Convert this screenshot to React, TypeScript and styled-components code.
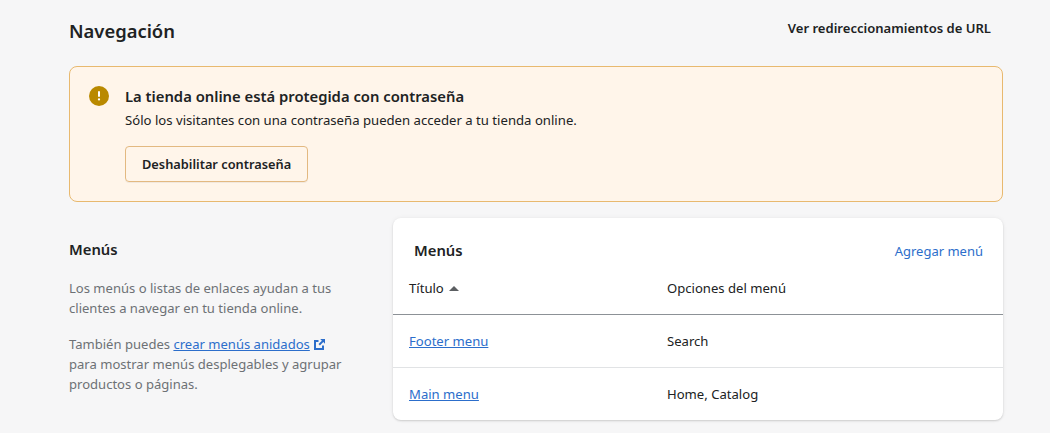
import React from 'react'
import styled, { createGlobalStyle } from 'styled-components'

const GlobalStyle = createGlobalStyle`
  html, body {
    margin: 0;
    height: 433px;
    overflow: hidden;
    background: #f6f6f7;
    font-family: "Noto Sans", "Open Sans", sans-serif;
    font-size: 13.1px;
    line-height: 20px;
    color: #202223;
  }
`

const Page = styled.div`
  width: 934px;
  margin-left: 69px;
  padding-top: 16px;
`

const Header = styled.header`
  display: flex;
  align-items: center;
  justify-content: space-between;
  height: 30px;
  margin-bottom: 20px;
`

const PageTitle = styled.h1`
  margin: 0;
  font-size: 18.4px;
  font-weight: 600;
  line-height: 30px;
`

const HeaderAction = styled.a`
  margin-right: 12px;
  margin-top: -6px;
  font-weight: 600;
  font-size: 13.05px;
`

const Banner = styled.section`
  display: flex;
  gap: 16px;
  box-sizing: border-box;
  height: 136px;
  padding: 19px 19px;
  background: #fff5ea;
  border: 1px solid #e8b96f;
  border-radius: 8px;
`

const BannerBody = styled.div`
  display: flex;
  flex-direction: column;
  align-items: flex-start;
`

const BannerTitle = styled.h2`
  margin: 0;
  font-size: 14.8px;
  font-weight: 600;
  line-height: 20px;
`

const BannerText = styled.p`
  margin: 4px 0 16px;
  font-size: 13.15px;
`

const Button = styled.button`
  height: 36px;
  padding: 0 16px;
  background: transparent;
  border: 1px solid #e3b981;
  border-radius: 4px;
  box-shadow: 0 1px 0 rgba(0, 0, 0, .05);
  font-family: inherit;
  font-size: 12.8px;
  font-weight: 600;
  color: #202223;
`

const Columns = styled.div`
  display: grid;
  grid-template-columns: 304px 610px;
  column-gap: 20px;
  margin-top: 16px;
`

const Aside = styled.div`
  padding-top: 21px;
`

const AsideTitle = styled.h3`
  margin: 0 0 19px;
  font-size: 14.8px;
  font-weight: 600;
  line-height: 20px;
`

const AsideText = styled.p`
  margin: 0 0 16px;
  font-size: 13.05px;
  color: #6d7175;
`

const TextLink = styled.a`
  color: #2c6ecb;
  text-decoration: underline;
`

const ExternalIcon = styled.svg`
  width: 11px;
  height: 11px;
  margin-left: 4.5px;
  vertical-align: -1px;
  fill: #2c6ecb;
`

const Card = styled.section`
  height: 202px;
  background: #fff;
  border-radius: 8px;
  box-shadow: 0 0 5px rgba(23, 24, 24, .05), 0 1px 2px rgba(0, 0, 0, .15);
  overflow: hidden;
`

const CardHeader = styled.div`
  display: flex;
  align-items: center;
  justify-content: space-between;
  height: 20px;
  padding: 22px 20px 0 21px;
`

const CardTitle = styled.h2`
  margin: 0;
  font-size: 14.8px;
  font-weight: 600;
`

const CardAction = styled.a`
  margin-top: 1px;
  font-size: 13px;
  color: #2c6ecb;
`

const Row = styled.div<{ $head?: boolean }>`
  display: grid;
  grid-template-columns: 258px 1fr;
  align-items: center;
  box-sizing: border-box;
  height: ${p => (p.$head ? '55px' : '53px')};
  padding-left: 16px;
  padding-top: ${p => (p.$head ? '2px' : '0')};
  padding-bottom: ${p => (p.$head ? '0' : '1px')};
  font-size: 13.1px;
  border-bottom: 1px solid ${p => (p.$head ? '#8c9196' : '#e1e3e5')};
  &:last-child {
    border-bottom: 0;
  }
`

const HeadLabel = styled.span`
  display: flex;
  align-items: center;
  gap: 5px;
`

const SortCaret = styled.svg`
  width: 10px;
  height: 5px;
  fill: #5c5f62;
`

const rows = [
  { title: 'Footer menu', options: 'Search' },
  { title: 'Main menu', options: 'Home, Catalog' },
]

export default function App() {
  return (
    <Page>
      <GlobalStyle />
      <Header>
        <PageTitle>Navegación</PageTitle>
        <HeaderAction>Ver redireccionamientos de URL</HeaderAction>
      </Header>

      <Banner>
        <svg width="20" height="20" viewBox="0 0 20 20">
          <circle cx="10" cy="10" r="10" fill="#b98900" />
          <rect x="9" y="5" width="2" height="6" rx="1" fill="#fff" />
          <circle cx="10" cy="13.4" r="1.15" fill="#fff" />
        </svg>
        <BannerBody>
          <BannerTitle>La tienda online está protegida con contraseña</BannerTitle>
          <BannerText>Sólo los visitantes con una contraseña pueden acceder a tu tienda online.</BannerText>
          <Button>Deshabilitar contraseña</Button>
        </BannerBody>
      </Banner>

      <Columns>
        <Aside>
          <AsideTitle>Menús</AsideTitle>
          <AsideText>Los menús o listas de enlaces ayudan a tus<br />clientes a navegar en tu tienda online.</AsideText>
          <AsideText>
            También puedes <TextLink>crear menús anidados</TextLink>
            <ExternalIcon viewBox="0 0 11 11">
              <path d="M6.2 0H11v4.8L9.3 3.1 5.9 6.5 4.5 5.1l3.4-3.4L6.2 0z" />
              <path d="M0 1h4.5v2H2v6h6V6.5h2V11H0V1z" />
            </ExternalIcon>
            <br />para mostrar menús desplegables y agrupar<br />productos o páginas.
          </AsideText>
        </Aside>

        <Card>
          <CardHeader>
            <CardTitle>Menús</CardTitle>
            <CardAction>Agregar menú</CardAction>
          </CardHeader>
          <Row $head>
            <HeadLabel>
              Título
              <SortCaret viewBox="0 0 10 5"><path d="M0 5l5-5 5 5z" /></SortCaret>
            </HeadLabel>
            <span>Opciones del menú</span>
          </Row>
          {rows.map(row => (
            <Row key={row.title}>
              <span><TextLink>{row.title}</TextLink></span>
              <span>{row.options}</span>
            </Row>
          ))}
        </Card>
      </Columns>
    </Page>
  )
}
